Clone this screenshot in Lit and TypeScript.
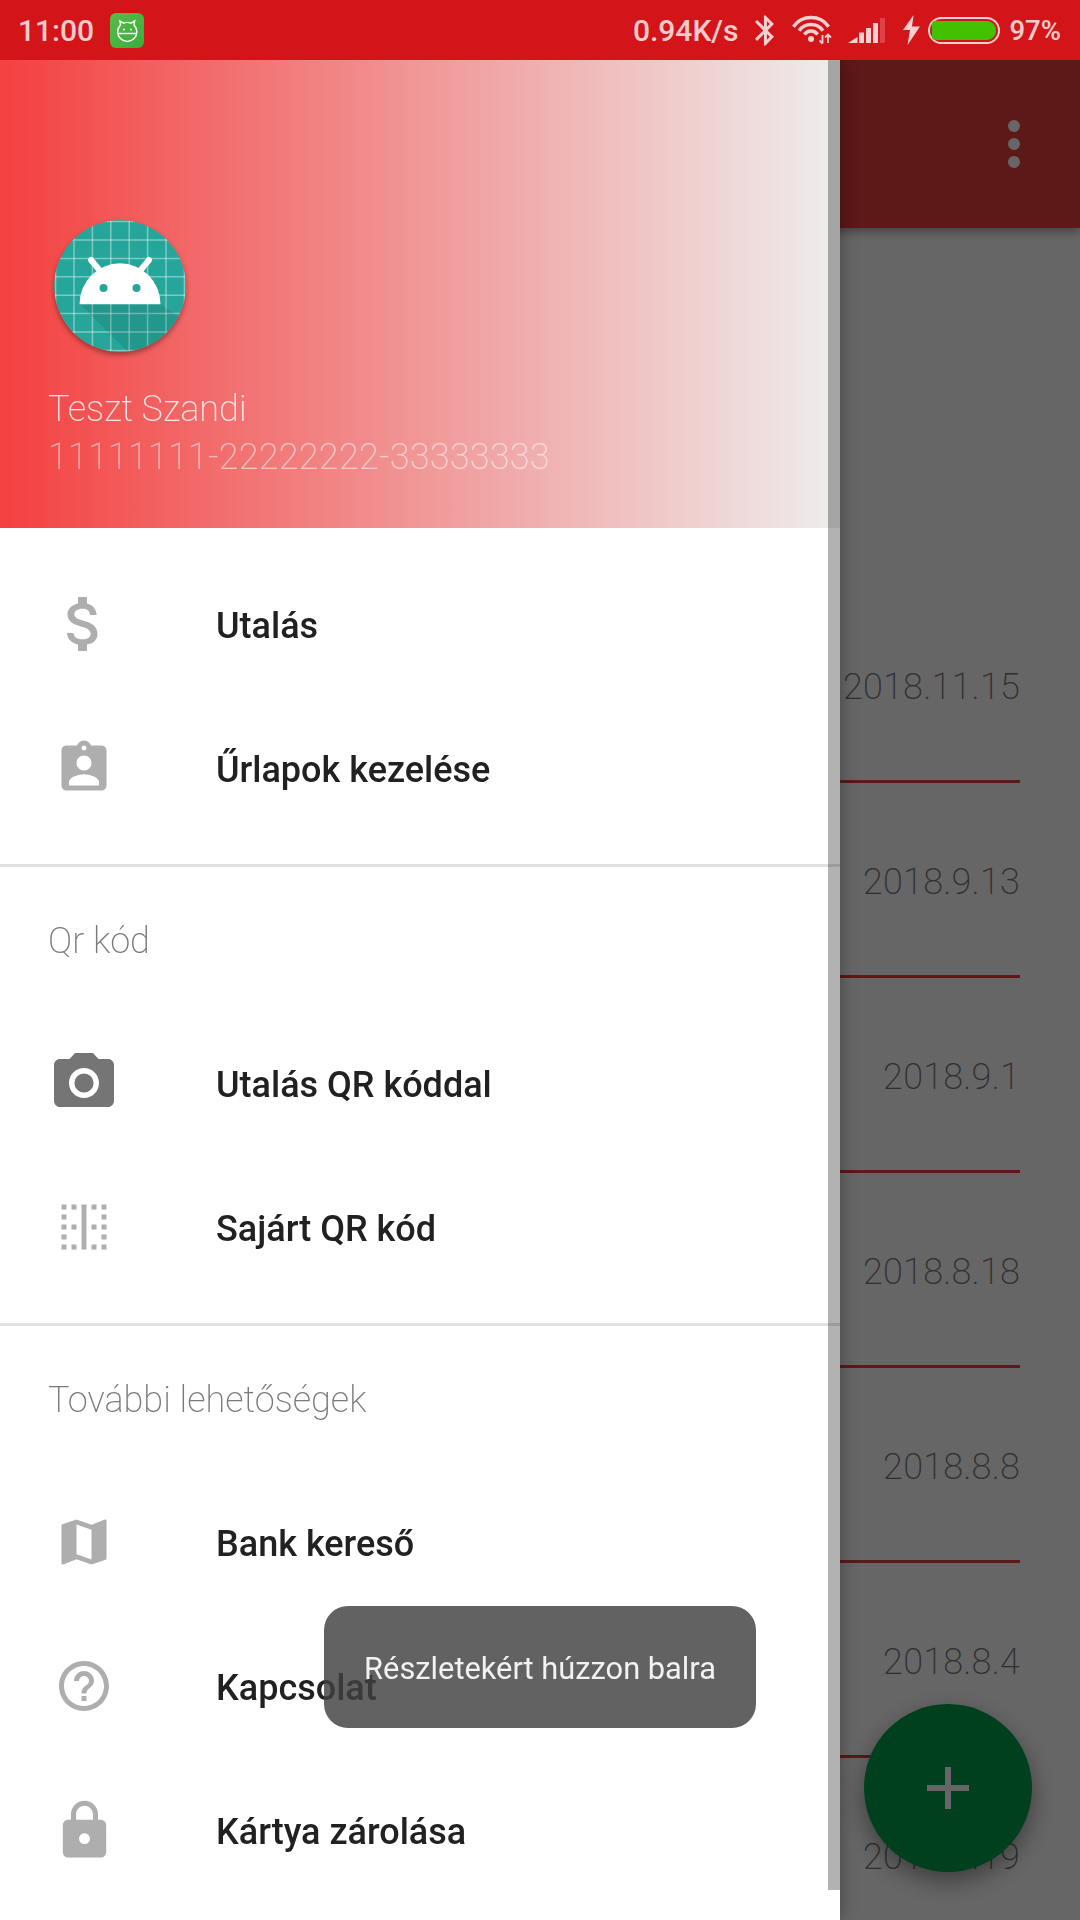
import { LitElement, html, css, svg } from "lit";
import { customElement } from "lit/decorators.js";

const ICONS: Record<string, string> = {
  money: "M11.8 10.9c-2.27-.59-3-1.2-3-2.15 0-1.09 1.01-1.85 2.7-1.85 1.78 0 2.44.85 2.5 2.1h2.21c-.07-1.72-1.12-3.3-3.21-3.81V3h-3v2.16c-1.94.42-3.5 1.68-3.5 3.61 0 2.31 1.91 3.46 4.7 4.13 2.5.6 3 1.48 3 2.41 0 .69-.49 1.79-2.7 1.79-2.06 0-2.87-.92-2.98-2.1h-2.2c.12 2.19 1.76 3.42 3.68 3.83V21h3v-2.15c1.95-.37 3.5-1.5 3.5-3.55 0-2.84-2.43-3.81-4.7-4.4z",
  form: "M19 3h-4.18C14.4 1.84 13.3 1 12 1c-1.3 0-2.4.84-2.82 2H5c-1.1 0-2 .9-2 2v14c0 1.1.9 2 2 2h14c1.1 0 2-.9 2-2V5c0-1.1-.9-2-2-2zm-7 0c.55 0 1 .45 1 1s-.45 1-1 1-1-.45-1-1 .45-1 1-1zm0 4c1.66 0 3 1.34 3 3s-1.34 3-3 3-3-1.34-3-3 1.34-3 3-3zm6 12H6v-1.4c0-2 4-3.1 6-3.1s6 1.1 6 3.1V19z",
  camera: "M9 2L7.17 4H4c-1.1 0-2 .9-2 2v12c0 1.1.9 2 2 2h16c1.1 0 2-.9 2-2V6c0-1.1-.9-2-2-2h-3.17L15 2H9zm3 15c-2.76 0-5-2.24-5-5s2.24-5 5-5 5 2.24 5 5-2.24 5-5 5zM12 8.8a3.2 3.2 0 1 0 0 6.4 3.2 3.2 0 0 0 0-6.4z",
  border: "M3 9h2V7H3v2zm0-4h2V3H3v2zm4 16h2v-2H7v2zm0-8h2v-2H7v2zm-4 0h2v-2H3v2zm0 8h2v-2H3v2zm0-4h2v-2H3v2zM7 5h2V3H7v2zm12 12h2v-2h-2v2zm-8 4h2V3h-2v18zm8 0h2v-2h-2v2zm0-8h2v-2h-2v2zm0-10v2h2V3h-2zm0 6h2V7h-2v2zm-4-4h2V3h-2v2zm0 16h2v-2h-2v2zm0-8h2v-2h-2v2z",
  map: "M20.5 3l-.16.03L15 5.1 9 3 3.36 4.9c-.21.07-.36.25-.36.48V20.5c0 .28.22.5.5.5l.16-.03L9 18.9l6 2.1 5.64-1.9c.21-.07.36-.25.36-.48V3.5c0-.28-.22-.5-.5-.5zM15 19l-6-2.11V5l6 2.11V19z",
  help: "M11 18h2v-2h-2v2zm1-16C6.48 2 2 6.48 2 12s4.48 10 10 10 10-4.48 10-10S17.52 2 12 2zm0 18c-4.41 0-8-3.59-8-8s3.59-8 8-8 8 3.59 8 8-3.59 8-8 8zm0-14c-2.21 0-4 1.79-4 4h2c0-1.1.9-2 2-2s2 .9 2 2c0 2-3 1.75-3 5h2c0-2.25 3-2.5 3-5 0-2.21-1.79-4-4-4z",
  lock: "M18 8h-1V6c0-2.76-2.24-5-5-5S7 3.24 7 6v2H6c-1.1 0-2 .9-2 2v10c0 1.1.9 2 2 2h12c1.1 0 2-.9 2-2V10c0-1.1-.9-2-2-2zm-6 9c-1.1 0-2-.9-2-2s.9-2 2-2 2 .9 2 2-.9 2-2 2zm3.1-9H8.9V6c0-1.71 1.39-3.1 3.1-3.1 1.71 0 3.1 1.39 3.1 3.1v2z",
};

const ICON_SIZE: Record<string, string> = {
  money: "s72",
  form: "s60",
  camera: "s72 dark",
  border: "s60",
  map: "s60",
  help: "s60",
  lock: "s65",
};

const DATES = ["2018.11.15", "2018.9.13", "2018.9.1", "2018.8.18", "2018.8.8", "2018.8.4", "2018.7.19"];
const GRID = [-64.4, -46, -27.6, -9.2, 9.2, 27.6, 46, 64.4];

@customElement("app-root")
export class AppRoot extends LitElement {
  static styles = css`
    :host {
      display: flex;
      flex-direction: column;
      width: 1080px;
      height: 1920px;
      position: relative;
      overflow: hidden;
      font-family: Roboto, "Noto Sans", sans-serif;
      background: #fff;
    }
    .status {
      height: 60px;
      flex: none;
      background: #d3151a;
      display: flex;
      align-items: center;
      padding: 0 19px 0 18px;
      color: rgba(255, 255, 255, 0.8);
      font-size: 30px;
      font-weight: 500;
      box-sizing: border-box;
      position: relative;
      z-index: 3;
    }
    .status svg { display: block; flex: none; }
    .notif { margin-left: 16px; }
    .status-right { margin-left: auto; display: flex; align-items: center; }
    .bt { margin-left: 17px; }
    .wifi { margin-left: 17px; }
    .signal { margin-left: 16px; }
    .bolt { margin-left: 18px; }
    .battery {
      width: 72px;
      height: 27px;
      margin-left: 8px;
      border: 2.5px solid rgba(255, 255, 255, 0.8);
      border-radius: 14px;
      padding: 2px;
      box-sizing: border-box;
      display: flex;
    }
    .battery-fill {
      flex: 1;
      background: #43c000;
      border-radius: 3px 9px 9px 3px;
    }
    .pct { margin-left: 9px; font-size: 27.5px; }

    .main { flex: 1; position: relative; overflow: hidden; }
    .page { height: 100%; overflow: hidden; }
    .toolbar {
      height: 168px;
      background: #e83c3c;
      box-shadow: 0 3px 10px rgba(0, 0, 0, 0.4);
      display: flex;
      align-items: center;
      justify-content: flex-end;
      padding-right: 60px;
      position: relative;
    }
    .kebab { display: flex; flex-direction: column; gap: 6px; }
    .kebab i { display: block; width: 12px; height: 12px; border-radius: 50%; background: #fff; }
    .list { padding: 360px 60px 0 0; }
    .row {
      height: 195px;
      box-sizing: border-box;
      border-bottom: 3px solid #e83c3c;
      display: flex;
      align-items: center;
      justify-content: flex-end;
      font-size: 36px;
      font-weight: 200;
      letter-spacing: 0.24px;
      color: #777;
      padding-top: 6px;
    }
    .fab {
      position: absolute;
      left: 864px;
      top: 1644px;
      width: 168px;
      height: 168px;
      border-radius: 50%;
      background: #00a04e;
      box-shadow: 0 9px 24px rgba(0, 0, 0, 0.4);
      display: flex;
      align-items: center;
      justify-content: center;
    }
    .scrim { position: absolute; inset: 0; background: rgba(0, 0, 0, 0.6); }
    .drawer {
      position: absolute;
      left: 0;
      top: 0;
      bottom: 0;
      width: 840px;
      background: #fff;
      box-shadow: 0 0 16px rgba(0, 0, 0, 0.35);
    }
    .scrollbar {
      position: absolute;
      right: 0;
      top: 0;
      width: 12px;
      height: 1830px;
      background: rgba(0, 0, 0, 0.3);
    }
    .header {
      height: 468px;
      box-sizing: border-box;
      padding: 160px 0 0 48px;
      background: linear-gradient(90deg, #f44040, #eeeeee);
      font-size: 36px;
      font-weight: 200;
    }
    .avatar {
      display: block;
      margin: 0 0 33px 6px;
      border-radius: 50%;
      box-shadow: 0 3px 5px rgba(0, 0, 0, 0.35);
    }
    .name { line-height: 48px; color: rgba(255, 255, 255, 0.85); }
    .account { line-height: 48px; color: rgba(255, 255, 255, 0.55); letter-spacing: 0.2px; }
    .group { padding: 24px 0; }
    .group + .group { border-top: 3px solid #e0e0e0; padding-top: 0; }
    .title {
      height: 144px;
      display: flex;
      align-items: center;
      padding: 4px 0 0 48px;
      box-sizing: border-box;
      font-size: 36px;
      font-weight: 200;
      color: #7a7a7a;
    }
    .item {
      height: 144px;
      display: flex;
      align-items: center;
      padding-left: 48px;
      gap: 96px;
      font-size: 36px;
      font-weight: 500;
      color: #212121;
    }
    .item span { padding-top: 3px; }
    .ico { width: 72px; height: 72px; flex: none; display: flex; align-items: center; justify-content: center; }
    .ico svg { display: block; fill: #aeaeae; }
    .ico svg.dark { fill: #757575; }
    .s72 { width: 72px; height: 72px; }
    .s65 { width: 65px; height: 65px; }
    .s60 { width: 60px; height: 60px; }
    .toast {
      position: absolute;
      left: 324px;
      top: 1606px;
      width: 432px;
      height: 122px;
      box-sizing: border-box;
      padding-top: 2px;
      border-radius: 24px;
      background: rgba(63, 63, 63, 0.82);
      color: #f2f2f2;
      font-size: 30.8px;
      display: flex;
      align-items: center;
      justify-content: center;
      z-index: 4;
    }
    .title, .name, .account, .item span { will-change: transform; }
  `;

  private avatar() {
    return html`<svg class="avatar" width="132" height="132" viewBox="-66 -66 132 132">
      <defs><clipPath id="av"><circle r="66"></circle></clipPath></defs>
      <g clip-path="url(#av)">
        <rect x="-66" y="-66" width="132" height="132" fill="#26a69a"></rect>
        ${GRID.map(
          (v) => svg`<path d="M${v} -66V66M-66 ${v}H66" stroke="#fff" stroke-opacity=".4" stroke-width="1.5"></path>`
        )}
        <path d="M-40 18 L20 78 L80 78 L80 44 L40 18Z" fill="#000" fill-opacity=".09"></path>
        <path d="M-29 -26 L-19 -14M29 -26 L19 -14" stroke="#fff" stroke-width="6" stroke-linecap="round"></path>
        <path d="M-40.5 18.3A40.5 41 0 0 1 40.5 18.3Z" fill="#fff"></path>
        <circle cx="-16.5" cy="2" r="4" fill="#26a69a"></circle>
        <circle cx="16.5" cy="2" r="4" fill="#26a69a"></circle>
      </g>
    </svg>`;
  }

  private statusIcons() {
    const c = "rgba(255,255,255,.8)";
    const arc = (r: number) => {
      const dx = (r * 0.82).toFixed(1);
      const dy = (r * 0.574).toFixed(1);
      return svg`<path d="M${19 - +dx} ${24 - +dy}A${r} ${r} 0 0 1 ${19 + +dx} ${24 - +dy}" fill="none" stroke="${c}" stroke-width="3.5"></path>`;
    };
    return html`
      <svg class="bt" width="20" height="32" viewBox="5 1 13.4 21.4" preserveAspectRatio="none" fill="${c}">
        <path d="M17.71 7.71L12 2h-1v7.59L6.41 5 5 6.41 10.59 12 5 17.59 6.41 19 11 14.41V22h1l5.71-5.71-4.3-4.29 4.3-4.29zM13 5.83l1.88 1.88L13 9.59V5.83zm1.88 10.46L13 18.17v-3.76l1.88 1.88z"></path>
      </svg>
      <svg class="wifi" width="40" height="30" viewBox="0 0 40 30">
        ${arc(21.5)}${arc(14.5)}${arc(8)}
        <circle cx="19" cy="24" r="3" fill="${c}"></circle>
        <path d="M27 18h12v12H27z" fill="#d3151a"></path>
        <path d="M30.5 20v8.5M27.5 25.5l3 3 0 0M36 28v-8.5M33 22.5l3-3 3 3" fill="none" stroke="${c}" stroke-width="1.8"></path>
      </svg>
      <svg class="signal" width="37" height="25" viewBox="0 0 37 25" fill="${c}">
        <path d="M0 25L9.5 19V25Z"></path>
        <rect x="11" y="14.5" width="5" height="10.5"></rect>
        <rect x="18" y="10" width="5" height="15"></rect>
        <rect x="25" y="5" width="5" height="20"></rect>
        <rect x="32" y="0" width="5" height="25" fill-opacity=".25"></rect>
      </svg>
      <svg class="bolt" width="17" height="30" viewBox="0 0 17 30" fill="${c}">
        <path d="M10.6 0L0 15H7L4.5 30L17 11.5H9Z"></path>
      </svg>
    `;
  }

  private item(icon: string, label: string) {
    return html`<div class="item">
      <div class="ico">
        <svg class=${ICON_SIZE[icon]} viewBox="0 0 24 24"><path d=${ICONS[icon]} fill-rule=${icon === "camera" ? "evenodd" : "nonzero"}></path></svg>
      </div>
      <span>${label}</span>
    </div>`;
  }

  render() {
    return html`
      <div class="status">
        <span>11:00</span>
        <svg class="notif" width="34" height="35" viewBox="0 0 34 35">
          <defs><linearGradient id="ng" x1="0" y1="0" x2="1" y2="1"><stop offset="0" stop-color="#5cba47"></stop><stop offset="1" stop-color="#38ad3a"></stop></linearGradient></defs>
          <rect width="34" height="35" rx="6" fill="url(#ng)"></rect>
          <g fill="none" stroke="#fff" stroke-width="1.4">
            <path d="M10.5 12L9.8 8L13.5 10.2A9.6 9.6 0 0 1 21 10.2L24.7 8L24 12A9.6 9.6 0 1 1 10.5 12Z"></path>
            <path d="M8 20.5H26.5"></path>
          </g>
          <circle cx="14" cy="16.5" r="1" fill="#fff"></circle>
          <circle cx="21" cy="16.5" r="1" fill="#fff"></circle>
        </svg>
        <div class="status-right">
          <span>0.94K/s</span>
          ${this.statusIcons()}
          <div class="battery"><div class="battery-fill"></div></div>
          <span class="pct">97%</span>
        </div>
      </div>
      <div class="main">
        <div class="page">
          <div class="toolbar"><div class="kebab"><i></i><i></i><i></i></div></div>
          <div class="list">${DATES.map((d) => html`<div class="row">${d}</div>`)}</div>
          <div class="fab">
            <svg width="42" height="42" viewBox="0 0 42 42"><path d="M18 0h6v18h18v6H24v18h-6V24H0v-6h18z" fill="#fff"></path></svg>
          </div>
        </div>
        <div class="scrim"></div>
        <div class="drawer">
          <div class="header">
            ${this.avatar()}
            <div class="name">Teszt Szandi</div>
            <div class="account">11111111-22222222-33333333</div>
          </div>
          <div class="group">
            ${this.item("money", "Utalás")}
            ${this.item("form", "Űrlapok kezelése")}
          </div>
          <div class="group">
            <div class="title">Qr kód</div>
            ${this.item("camera", "Utalás QR kóddal")}
            ${this.item("border", "Sajárt QR kód")}
          </div>
          <div class="group">
            <div class="title">További lehetőségek</div>
            ${this.item("map", "Bank kereső")}
            ${this.item("help", "Kapcsolat")}
            ${this.item("lock", "Kártya zárolása")}
          </div>
          <div class="scrollbar"></div>
        </div>
      </div>
      <div class="toast">Részletekért húzzon balra</div>
    `;
  }
}
